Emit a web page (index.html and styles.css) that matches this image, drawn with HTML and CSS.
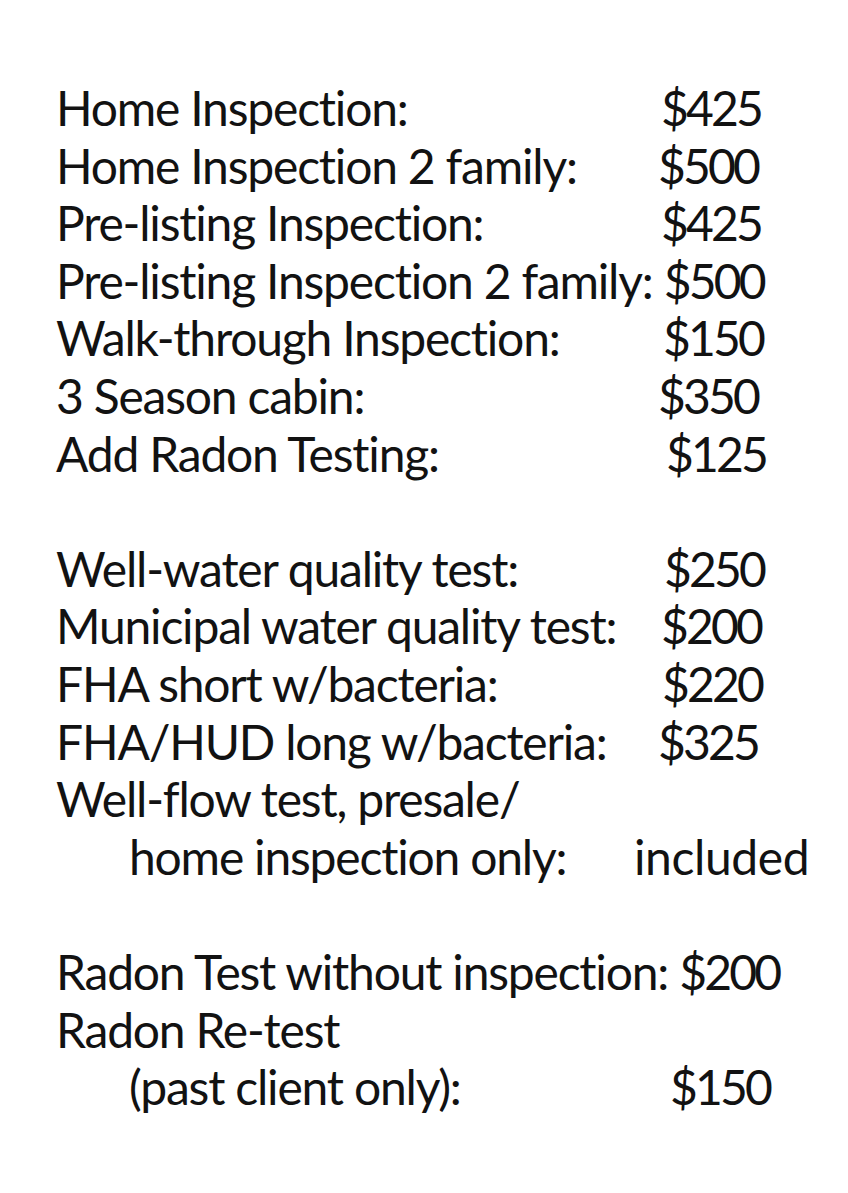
FILE: index.html
```html
<!DOCTYPE html>
<html lang="en">
<head>
<meta charset="utf-8">
<title>Inspection Prices</title>
<link rel="stylesheet" href="styles.css">
</head>
<body>
<main class="sheet">
  <section class="group">
    <div class="row"><span class="label">Home Inspection:</span><span class="price">$425</span></div>
    <div class="row"><span class="label">Home Inspection 2 family:</span><span class="price nudge-l3">$500</span></div>
    <div class="row"><span class="label">Pre-listing Inspection:</span><span class="price">$425</span></div>
    <div class="row single">Pre-listing Inspection 2 family: <span class="price">$500</span></div>
    <div class="row"><span class="label">Walk-through Inspection:</span><span class="price nudge-r2">$150</span></div>
    <div class="row"><span class="label">3 Season cabin:</span><span class="price nudge-l3">$350</span></div>
    <div class="row"><span class="label">Add Radon Testing:</span><span class="price nudge-r5">$125</span></div>
  </section>
  <section class="group">
    <div class="row"><span class="label">Well-water quality test:</span><span class="price nudge-r3">$250</span></div>
    <div class="row"><span class="label">Municipal water quality test:</span><span class="price">$200</span></div>
    <div class="row"><span class="label">FHA short w/bacteria:</span><span class="price nudge-r1">$220</span></div>
    <div class="row"><span class="label">FHA/HUD long w/bacteria:</span><span class="price nudge-l3">$325</span></div>
    <div class="row single">Well-flow test, presale/</div>
    <div class="row"><span class="label indent">home inspection only:</span><span class="included">included</span></div>
  </section>
  <section class="group">
    <div class="row single">Radon Test without inspection: <span class="price">$200</span></div>
    <div class="row single">Radon Re-test</div>
    <div class="row"><span class="label indent">(past client only):</span><span class="price nudge-r9">$150</span></div>
  </section>
</main>
</body>
</html>
```

FILE: styles.css
```css
html, body {
  margin: 0;
  padding: 0;
  background: #ffffff;
}

.sheet {
  padding: 79px 0 0 56px;
  font-family: "Lato", "Open Sans", sans-serif;
  font-size: 48px;
  line-height: 57.6px;
  letter-spacing: -1.2px;
  font-variant-ligatures: none;
  font-feature-settings: "liga" 0, "clig" 0;
  color: #121212;
}

.group {
  display: flex;
  flex-direction: column;
  margin-bottom: 57.6px;
}

.row {
  display: grid;
  grid-template-columns: 605px auto;
  white-space: nowrap;
}

.row.single {
  display: block;
}

.label.indent {
  padding-left: 73px;
}

.price {
  letter-spacing: -2.8px;
}

.included {
  margin-left: -27px;
  letter-spacing: -0.4px;
}

.nudge-l3 { margin-left: -3px; }
.nudge-r1 { margin-left: 1px; }
.nudge-r2 { margin-left: 2px; }
.nudge-r3 { margin-left: 3px; }
.nudge-r5 { margin-left: 5px; }
.nudge-r9 { margin-left: 9px; }
```
